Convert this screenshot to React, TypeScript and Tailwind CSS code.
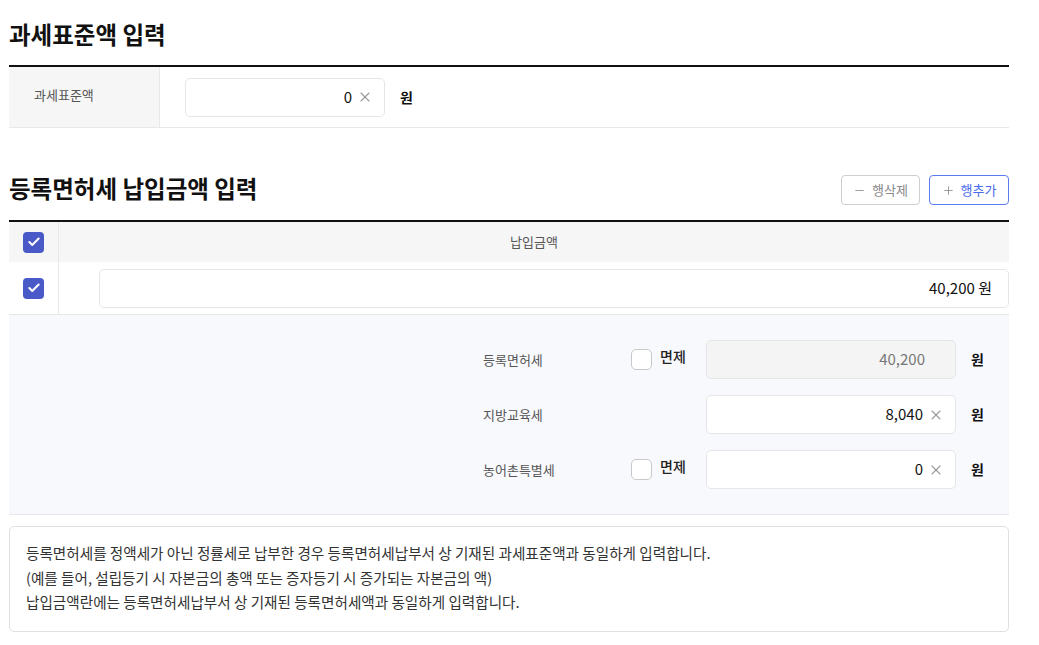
import { Check, Minus, Plus, X } from "lucide-react";

const font = { fontFamily: '"Noto Sans CJK KR", "Noto Sans", sans-serif' };

function CheckBox({ checked }: { checked?: boolean }) {
  if (checked) {
    return (
      <span className="flex h-[21px] w-[21px] items-center justify-center rounded-[4px] bg-[#4a59c8]">
        <Check className="h-[14px] w-[14px] text-white" strokeWidth={3.5} />
      </span>
    );
  }
  return <span className="block h-[21px] w-[21px] rounded-[5px] border border-[#c8c8c8] bg-white" />;
}

function ClearIcon() {
  return <X className="ml-[5px] h-[16px] w-[16px] text-[#999]" strokeWidth={1.6} />;
}

function AmountInput({ value, disabled }: { value: string; disabled?: boolean }) {
  return (
    <div
      className={`flex h-[39px] w-[250px] items-center justify-end rounded-[5px] border border-[#e6e6e6] text-[15px] ${
        disabled ? "bg-[#f4f4f4] pr-[30px] text-[#777]" : "bg-white pr-[11px] text-[#111]"
      }`}
    >
      <span>{value}</span>
      {!disabled && <ClearIcon />}
    </div>
  );
}

function TaxRow({ label, value, exempt, disabled }: { label: string; value: string; exempt?: boolean; disabled?: boolean }) {
  return (
    <div className="flex items-center">
      <div className="w-[148px] text-[13px] text-[#555]">{label}</div>
      <div className="flex w-[75px] items-center gap-[8px]">
        {exempt && (
          <>
            <CheckBox />
            <span className="-mt-[6px] text-[14px] font-medium text-[#222]">면제</span>
          </>
        )}
      </div>
      <AmountInput value={value} disabled={disabled} />
      <span className="ml-[15px] text-[14px] font-bold text-[#111]">원</span>
    </div>
  );
}

export default function App() {
  return (
    <div className="min-h-[645px] w-[1039px] bg-white pl-[9px] pt-[18px]" style={font}>
      <div className="w-[1000px]">
        <h2 className="text-[23.5px] font-bold leading-[33px] text-[#111]">과세표준액 입력</h2>

        <div className="mt-[14px] border-t-2 border-[#111]">
          <div className="flex h-[61px] items-center border-b border-[#e8e8e8]">
            <div className="flex h-full w-[151px] items-center border-r border-[#e8e8e8] bg-[#f6f6f6] pb-[4px] pl-[25px] text-[13px] text-[#555]">
              과세표준액
            </div>
            <div className="ml-[25px] flex h-[39px] w-[200px] items-center justify-end rounded-[5px] border border-[#e6e6e6] pr-[11px] text-[15px] text-[#111]">
              <span>0</span>
              <ClearIcon />
            </div>
            <span className="ml-[15px] text-[14px] font-bold text-[#111]">원</span>
          </div>
        </div>

        <div className="mt-[44px] flex items-end justify-between">
          <h2 className="text-[23.5px] font-bold leading-[33px] text-[#111]">등록면허세 납입금액 입력</h2>
          <div className="flex gap-[9px]">
            <button className="flex h-[30px] w-[79px] items-center justify-center gap-[6px] rounded-[4px] border border-[#cfcfcf] bg-white text-[13px] text-[#888]">
              <Minus className="h-[13px] w-[13px]" strokeWidth={1.5} />
              행삭제
            </button>
            <button className="flex h-[30px] w-[80px] items-center justify-center gap-[6px] rounded-[4px] border border-[#5b7cf0] bg-white text-[13px] text-[#4a6bea]">
              <Plus className="h-[13px] w-[13px] text-[#888]" strokeWidth={1.5} />
              행추가
            </button>
          </div>
        </div>

        <div className="mt-[15px] border-t-2 border-[#111]">
          <div className="flex h-[40px] bg-[#f6f6f6]">
            <div className="flex w-[50px] items-center justify-center border-r border-[#e8e8e8]">
              <CheckBox checked />
            </div>
            <div className="flex flex-1 items-center justify-center text-[13px] text-[#555]">납입금액</div>
          </div>
          <div className="flex h-[53px] border-b border-[#e8e8e8]">
            <div className="flex w-[50px] items-center justify-center border-r border-[#e8e8e8]">
              <CheckBox checked />
            </div>
            <div className="flex flex-1 items-center pl-[40px]">
              <div className="flex h-[39px] flex-1 items-center justify-end rounded-[5px] border border-[#e6e6e6] pr-[16px] text-[15px] text-[#111]">
                40,200 원
              </div>
            </div>
          </div>

          <div className="flex flex-col gap-[16px] border-b border-[#e8e8e8] bg-[#f8f9fd] pb-[25px] pl-[474px] pt-[25px]">
            <TaxRow label="등록면허세" value="40,200" exempt disabled />
            <TaxRow label="지방교육세" value="8,040" />
            <TaxRow label="농어촌특별세" value="0" exempt />
          </div>
        </div>

        <div className="mt-[11px] rounded-[5px] border border-[#e0e0e0] px-[16px] pb-[16px] pt-[14px] text-[14.6px] leading-[24.5px] text-[#333]">
          <p>등록면허세를 정액세가 아닌 정률세로 납부한 경우 등록면허세납부서 상 기재된 과세표준액과 동일하게 입력합니다.</p>
          <p>(예를 들어, 설립등기 시 자본금의 총액 또는 증자등기 시 증가되는 자본금의 액)</p>
          <p>납입금액란에는 등록면허세납부서 상 기재된 등록면허세액과 동일하게 입력합니다.</p>
        </div>
      </div>
    </div>
  );
}
